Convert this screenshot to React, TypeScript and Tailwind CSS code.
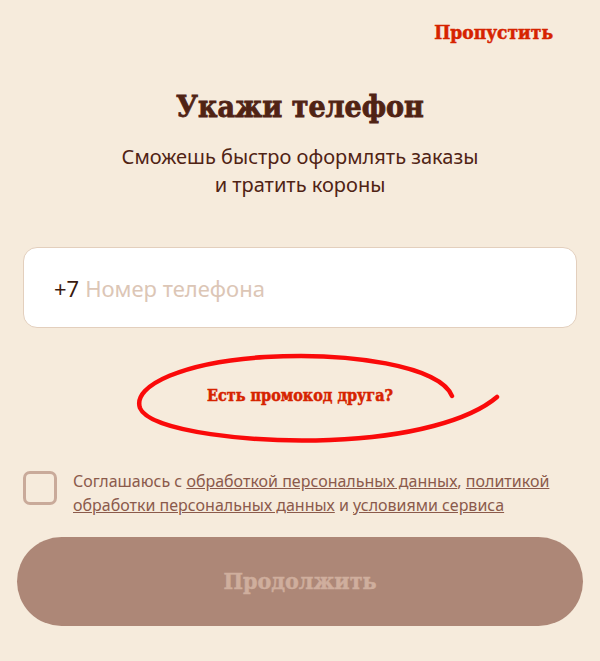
import React, { useState } from 'react';

const serif = "font-['DejaVu_Serif_Condensed','DejaVu_Serif',serif] [font-stretch:condensed] [-webkit-text-stroke:0.5px_currentColor]";
const sans = "font-['Noto_Sans',sans-serif]";

export default function App() {
  const [phone, setPhone] = useState('');
  const [agree, setAgree] = useState(false);

  return (
    <div className={`relative min-h-[661px] w-[600px] bg-[#f6ebdc] ${sans}`}>
      {/* Top bar */}
      <div className="flex justify-end px-[47px] pt-[20px]">
        <button className={`${serif} text-[19px] font-bold leading-[24px] text-[#d62300]`}>Пропустить</button>
      </div>

      {/* Heading */}
      <h1 className={`${serif} mt-[45px] text-center text-[30px] font-bold leading-[36px] text-[#502314] [-webkit-text-stroke:0.8px_currentColor]`}>
        Укажи телефон
      </h1>
      <p className="mt-[18px] text-center text-[20px] leading-[28px] text-[#502314]">
        Сможешь быстро оформлять заказы
        <br />
        и тратить короны
      </p>

      {/* Phone input */}
      <div className="mx-[23px] mt-[48px] flex h-[81px] items-center rounded-[14px] border border-[#e3cfbd] bg-white px-[30px]">
        <span className="text-[22px] leading-none text-[#3a1a10]">+7</span>
        <input
          value={phone}
          onChange={(e) => setPhone(e.target.value)}
          placeholder="Номер телефона"
          className="ml-[6px] flex-1 bg-transparent text-[22px] leading-none text-[#3a1a10] outline-none placeholder:text-[#dcc6b6]"
        />
      </div>

      {/* Promo code link */}
      <div className="mt-[58px] flex justify-center">
        <button className={`${serif} text-[16px] font-bold leading-[20px] text-[#d62300]`}>Есть промокод друга?</button>
      </div>

      {/* Consent */}
      <div className="mt-[63px] flex items-start gap-[16px] px-[23px]">
        <button
          onClick={() => setAgree(!agree)}
          className="mt-[2px] h-[34px] w-[34px] shrink-0 rounded-[7px] border-[3px] border-[#c9aa9a]"
        />
        <p className="text-[16px] leading-[24px] text-[#8b5a4b]">
          Соглашаюсь с <a className="underline">обработкой персональных данных</a>,{' '}
          <a className="underline">политикой обработки персональных данных</a> и{' '}
          <a className="underline">условиями сервиса</a>
        </p>
      </div>

      {/* Continue */}
      <div className="mt-[20px] px-[17px]">
        <button
          disabled={!agree || !phone}
          className={`${serif} h-[89px] w-full rounded-full bg-[#ad8777] text-[23px] font-bold text-[#cfae9d]`}
        >
          Продолжить
        </button>
      </div>

      {/* Hand-drawn highlight around the promo link */}
      <svg className="pointer-events-none absolute left-0 top-0" width="600" height="661" viewBox="0 0 600 661">
        <path
          d="M452,396 C440,366 350,352 265,357 C185,362 132,385 140,408 C150,432 255,443 330,440 C410,437 470,420 497,397"
          fill="none"
          stroke="#fa0a0a"
          strokeWidth="4.5"
          strokeLinecap="round"
        />
      </svg>
    </div>
  );
}
